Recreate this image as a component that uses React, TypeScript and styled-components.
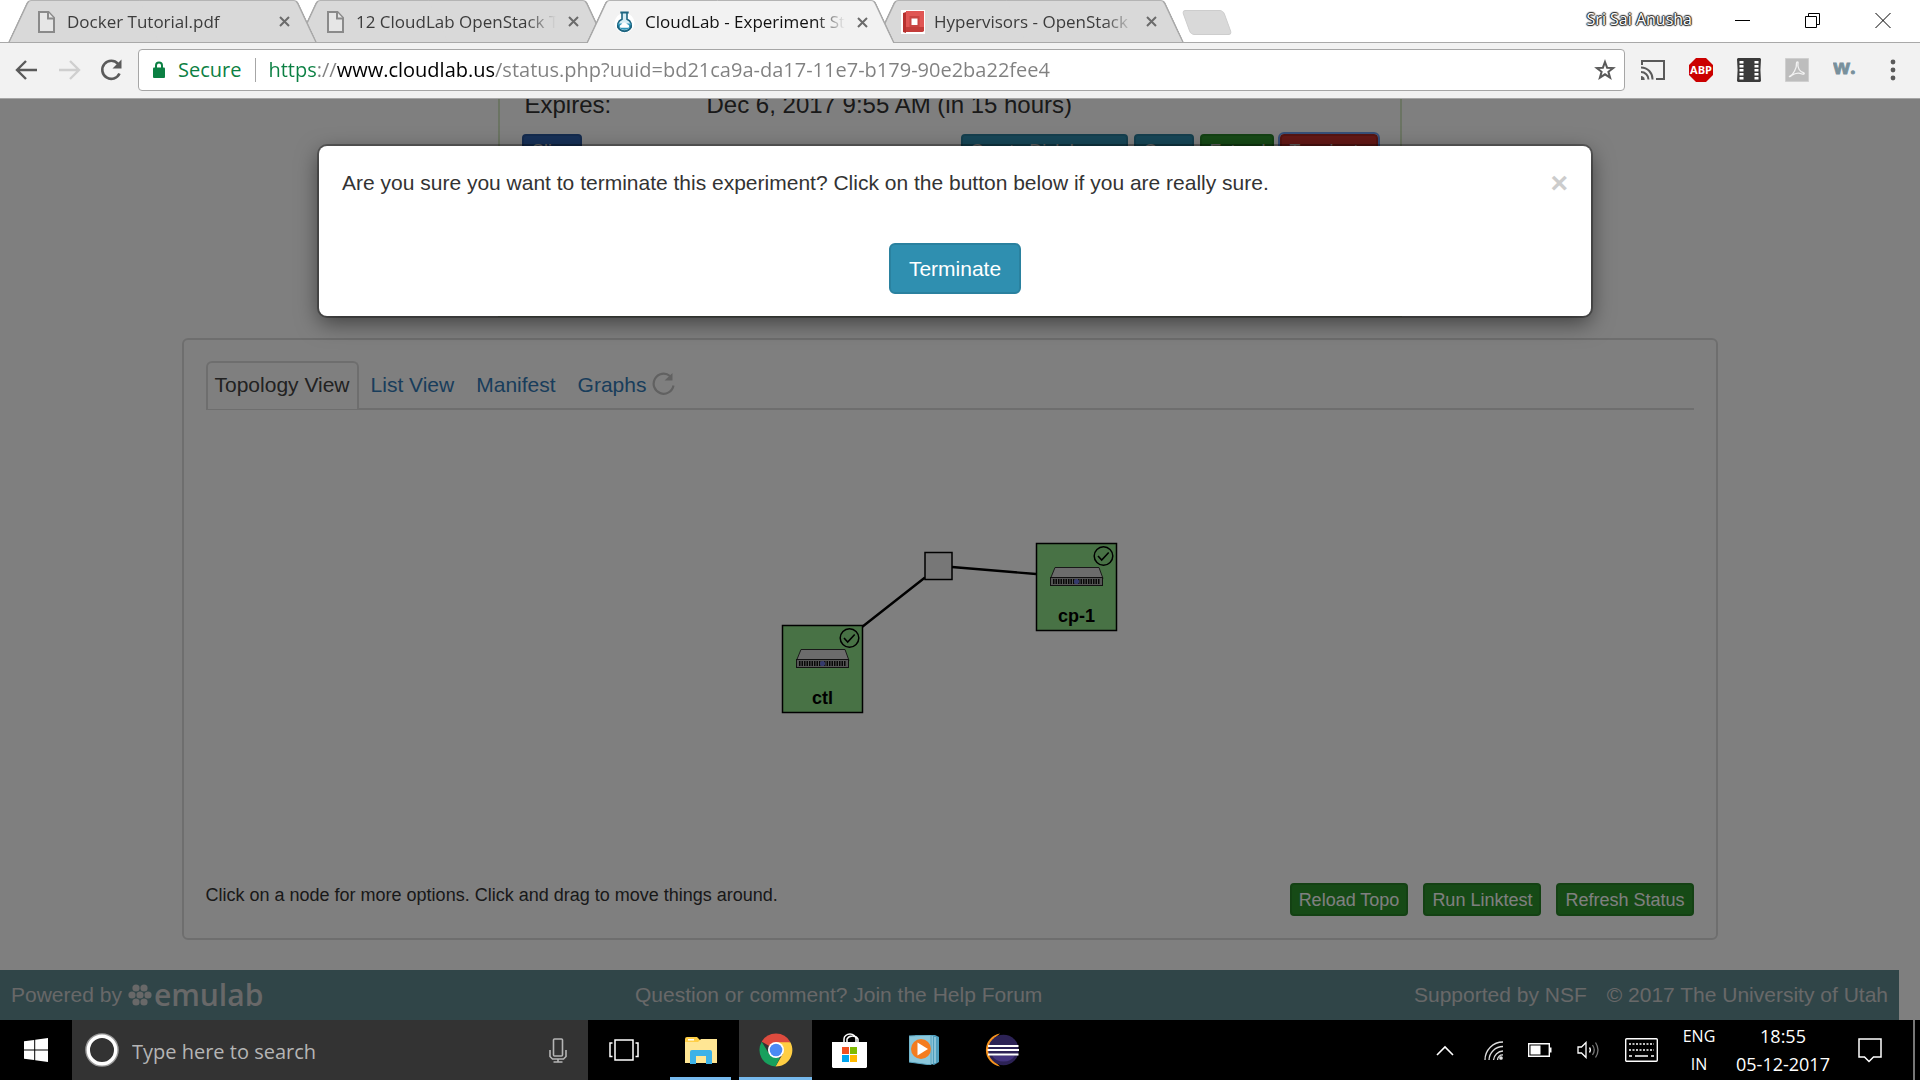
import React from "react";
import styled, { createGlobalStyle, css } from "styled-components";

const GlobalStyle = createGlobalStyle`
  *, *::before, *::after { box-sizing: border-box; }
  body { margin: 0; background: #fff; overflow: hidden; }
  button, input { font: inherit; color: inherit; }
  button { padding: 0; border: 0; background: none; cursor: pointer; }
  svg { display: block; flex: none; }
`;

const uiFont = `"Open Sans", "Noto Sans", sans-serif`;
const pageFont = `"Liberation Sans", Arial, sans-serif`;

const Desktop = styled.div`
  display: flex;
  flex-direction: column;
  height: 100vh;
  font-family: ${uiFont};
`;

/* ---------- Browser tab strip ---------- */

const TabStrip = styled.header`
  display: flex;
  height: 43px;
  padding-left: 8px;
  background: #fff;
  border-bottom: 1px solid #a9a9a9;
`;

const Tab = styled.div<{ $active?: boolean; $level: number }>`
  position: relative;
  z-index: ${(p) => p.$level};
  display: flex;
  align-items: center;
  flex: 0 1 309px;
  min-width: 0;
  height: ${(p) => (p.$active ? 43 : 42)}px;
  margin-right: -20px;
  padding: 1px 25px 0 26px;
  font-size: 17px;
  color: ${(p) => (p.$active ? "#111" : "#3c3c3c")};

  &::before,
  &::after {
    content: "";
    position: absolute;
    z-index: -1;
    top: 0;
    bottom: 0;
    width: 51%;
    background: ${(p) => (p.$active ? "#f2f2f2" : "#d9d9d9")};
    border-top: 1px solid #b4b4b4;
  }
  &::before {
    left: 0;
    border-left: 2px solid #a9a9a9;
    border-top-left-radius: 4px;
    transform: skewX(-25deg);
    transform-origin: bottom left;
  }
  &::after {
    right: 0;
    border-right: 2px solid #a9a9a9;
    border-top-right-radius: 4px;
    transform: skewX(25deg);
    transform-origin: bottom right;
  }
`;

const TabIcon = styled.span`
  display: flex;
  flex: none;
  justify-content: center;
  width: 24px;
`;

const TabTitle = styled.span`
  flex: 1;
  min-width: 0;
  margin: 0 10px 0 9px;
  overflow: hidden;
  white-space: nowrap;
  line-height: 24px;
  mask-image: linear-gradient(to right, #000 calc(100% - 30px), transparent);
`;

const TabClose = styled.button`
  display: flex;
  padding: 2px;
  color: #6b6b6b;
`;

const NewTab = styled.button`
  width: 42px;
  height: 25px;
  margin: 10px 0 0 22px;
  background: #d9d9d9;
  border: 1px solid #cdcdcd;
  border-radius: 4px;
  transform: skewX(20deg);
`;

const WindowControls = styled.div`
  display: flex;
  align-items: flex-start;
  margin-left: auto;
  padding-right: 29px;
`;

const UserName = styled.span`
  margin: 8px 43px 0 0;
  font-size: 16px;
  line-height: 22px;
  color: #fff;
  text-shadow: 1px 0 1px #222, -1px 0 1px #222, 0 1px 1px #222, 0 -1px 1px #222, 0 0 2px #333;
`;

const WindowButton = styled.button`
  display: flex;
  margin: 12px 0 0 54px;
  &:first-of-type { margin-left: 0; }
`;

/* ---------- Browser toolbar ---------- */

const Toolbar = styled.nav`
  display: flex;
  align-items: center;
  height: 56px;
  padding: 0 20px 2px 14px;
  background: #f2f2f2;
  border-bottom: 1px solid #a6a6a6;
`;

const NavButtons = styled.div`
  display: flex;
  gap: 16px;
  margin-right: 14px;
`;

const IconButton = styled.button`
  display: flex;
`;

const Omnibox = styled.div`
  display: flex;
  align-items: center;
  flex: 1;
  height: 42px;
  padding: 0 8px 0 13px;
  font-size: 20px;
  background: #fff;
  border: 1px solid #a6a6a6;
  border-radius: 4px;
`;

const Secure = styled.label`
  margin: 0 12px 0 12px;
  padding-right: 14px;
  line-height: 24px;
  color: #0b8043;
  border-right: 1px solid #a6a6a6;
`;

const UrlInput = styled.input`
  flex: 1;
  min-width: 0;
  height: 30px;
  padding: 0;
  border: 0;
  outline: 0;
  background: linear-gradient(to right, #0b8043 48px, #808080 48px 68px, #000 68px 227px, #808080 227px);
  background-clip: text;
  -webkit-background-clip: text;
  -webkit-text-fill-color: transparent;
`;

const Extensions = styled.div`
  display: flex;
  align-items: center;
  gap: 24px;
  margin-left: 16px;
  & > :last-child { margin-left: 5px; }
`;

/* ---------- Experiment page ---------- */

const Viewport = styled.div`
  position: relative;
  display: flex;
  flex: 1;
  flex-direction: column;
  min-height: 0;
  padding-right: 21px;
  overflow: hidden;
  background: #fff;
  font-family: ${pageFont};
  color: #333;
`;

const Details = styled.section`
  width: 904px;
  height: 226px;
  margin: -8px auto 0;
  padding: 0 22px;
  border: 2px solid #d6e9c6;
  border-top: 0;
`;

const DetailRow = styled.dl`
  display: grid;
  grid-template-columns: 182px 1fr;
  margin: 0 0 15px;
  padding-left: 3px;
  font-size: 24px;
  line-height: 28px;
  dt, dd { margin: 0; }
`;

const ActionRow = styled.div`
  display: flex;
  gap: 6px;
`;

const tones = {
  blue: css`background: #2f62b0; border-color: #29569c;`,
  teal: css`background: #2f8fb0; border-color: #2a7f9d;`,
  green: css`background: #2c942c; border-color: #268226;`,
  red: css`background: #c9302c; border-color: #ac2925; outline: 2px solid #6f9ff0;`,
};

const SmallButton = styled.button<{ $tone: keyof typeof tones; $push?: boolean }>`
  height: 33px;
  min-width: 60px;
  padding: 0 7px;
  font-size: 18px;
  line-height: 26px;
  white-space: nowrap;
  color: #fff;
  border: 2px solid;
  border-radius: 4px;
  ${(p) => tones[p.$tone]}
  ${(p) => p.$push && css`margin-right: auto;`}
`;

const Panel = styled.main`
  width: 81%;
  max-width: 1536px;
  margin: 21px auto 0;
  padding: 22px;
  border: 2px solid #ddd;
  border-radius: 6px;
`;

const ViewTabs = styled.div`
  display: flex;
  align-items: center;
  height: 48px;
  font-size: 21px;
  border-bottom: 2px solid #ddd;
`;

const ViewTab = styled.a<{ $active?: boolean }>`
  height: 48px;
  padding: 0 11px;
  line-height: 48px;
  color: #337ab7;
  text-decoration: none;
  &:last-of-type { padding-right: 6px; }
  ${(p) =>
    p.$active &&
    css`
      margin-right: 1px;
      padding: 0 7px;
      color: #444;
      background: #fff;
      border: 2px solid #ddd;
      border-bottom: 0;
      border-radius: 6px 6px 0 0;
      line-height: 44px;
    `}
`;

const Canvas = styled.div`
  display: flex;
  align-items: center;
  justify-content: center;
  height: 436px;
`;

const PanelFooter = styled.div`
  display: flex;
  align-items: flex-start;
  gap: 15px;
  margin-top: 37px;
`;

const Hint = styled.p`
  flex: 1;
  margin: 0;
  font-size: 18px;
  line-height: 24px;
`;

const PageFooter = styled.footer`
  display: flex;
  align-items: center;
  justify-content: space-between;
  height: 50px;
  margin-top: auto;
  padding: 0 11px;
  font-size: 21px;
  color: #d0d0d0;
  background: #608a90;
  a { color: inherit; text-decoration: none; }
`;

const FooterGroup = styled.div<{ $end?: boolean }>`
  display: flex;
  align-items: center;
  gap: ${(p) => (p.$end ? 20 : 6)}px;
`;

const Emulab = styled.a`
  display: flex;
  align-items: center;
  gap: 2px;
  font-family: ${uiFont};
  font-size: 30px;
  font-weight: 600;
  line-height: 36px;
`;

/* ---------- Terminate dialog ---------- */

const Backdrop = styled.div`
  position: absolute;
  inset: 0;
  display: flex;
  align-items: flex-start;
  justify-content: center;
  padding: 47px 10px 0 0;
  background: rgba(0, 0, 0, 0.5);
`;

const Dialog = styled.div`
  width: 67%;
  max-width: 1272px;
  padding: 23px 23px 22px;
  background: #fff;
  border-radius: 8px;
  box-shadow: 0 0 0 2px rgba(0, 0, 0, 0.3), 0 7px 22px rgba(0, 0, 0, 0.5);
  text-align: center;
`;

const DialogHead = styled.div`
  display: flex;
  align-items: center;
  justify-content: space-between;
  height: 28px;
  font-size: 21px;
`;

const DialogClose = styled.button`
  font-size: 30px;
  font-weight: 700;
  line-height: 28px;
  color: #ccc;
`;

const ConfirmButton = styled.button`
  height: 51px;
  margin-top: 46px;
  padding: 0 18px;
  font-size: 21px;
  color: #fff;
  background: #2f8fb0;
  border: 2px solid #2a819f;
  border-radius: 6px;
`;

/* ---------- Windows taskbar ---------- */

const Taskbar = styled.footer`
  display: flex;
  height: 60px;
  color: #fff;
  background: #000;
`;

const TaskButton = styled.button<{ $width: number; $active?: boolean; $running?: boolean }>`
  display: flex;
  align-items: center;
  justify-content: center;
  width: ${(p) => p.$width}px;
  background: ${(p) => (p.$active ? "#333" : "transparent")};
  border-top: 3px solid transparent;
  border-bottom: 3px solid ${(p) => (p.$running ? "#76b9ed" : "transparent")};
`;

const Search = styled.div`
  display: flex;
  align-items: center;
  width: 516px;
  padding: 0 21px 0 13px;
  background: #333;
  input {
    flex: 1;
    min-width: 0;
    height: 36px;
    margin-left: 13px;
    padding: 2px 0 0;
    font-size: 20px;
    background: none;
    border: 0;
    outline: 0;
  }
  input::placeholder { color: #b5b5b5; opacity: 1; }
`;

const AppGroup = styled.div`
  display: flex;
  gap: 8px;
  margin-left: 10px;
`;

const Tray = styled.div`
  display: flex;
  align-items: center;
  margin-left: auto;
`;

const TrayIcons = styled.div`
  display: flex;
  align-items: center;
  gap: 25px;
  margin-right: 22px;
  & > :first-child { margin-right: 5px; }
`;

const TrayText = styled.div<{ $width: number; $size: number }>`
  width: ${(p) => p.$width}px;
  font-size: ${(p) => p.$size}px;
  line-height: 28px;
  text-align: center;
`;

const Notifications = styled.button`
  display: flex;
  margin: 0 31px 0 10px;
`;

const ShowDesktop = styled.button`
  width: 7px;
  height: 60px;
  border-left: 2px solid #777;
`;

/* ---------- Drawings ---------- */

const PageIcon = () => (
  <svg width="17" height="22" viewBox="0 0 17 22" fill="#e6e6e6" stroke="#8a8a8a" strokeWidth="2">
    <path d="M1 1h9.500l5.500 6v14H1z" />
    <path d="M10 1v6.500h6" />
  </svg>
);

const FlaskIcon = () => (
  <svg width="21" height="22" viewBox="0 0 21 22">
    <circle cx="10.500" cy="12" r="10" fill="#fff" />
    <path d="M8 1.500v6.700A6.800 6.300 0 1 0 13 8.200V1.500" fill="#d6edf5" stroke="#1b6480" strokeWidth="1.600" />
    <path d="M3.800 12.500h13.400a6.700 6.300 0 1 1-13.400 0z" fill="#2d95b9" />
    <path d="M3.700 14a6.800 6.300 0 0 0 13.600 0" fill="none" stroke="#1b6480" strokeWidth="1.600" />
    <path d="M6.300 1.500h8.400" stroke="#1b6480" strokeWidth="2" />
    <path d="M6.500 16.800a1.900 1.900 0 0 1 .8-3.300 3.300 3 0 0 1 6-.3 2 2 0 0 1 1 3.600z" fill="#fff" />
  </svg>
);

const OpenStackIcon = () => (
  <svg width="24" height="24" viewBox="0 0 24 24">
    <path fill="#fff" d="M0 0h24v24H0z" />
    <path fill="#b7302e" d="M2 3l3-1v21l-3-1z" />
    <path fill="#e05654" d="M5 1h18v20l-2 1H5z" />
    <path fill="#c33c39" d="M5 17h18v4l-2 1H5z" />
    <path fill="#c94543" d="M8.500 6h10v11h-10z" />
    <path fill="#fff" d="M10.500 8.500h6v6.500h-6z" />
  </svg>
);

const Cross = () => (
  <svg width="11" height="11" viewBox="0 0 11 11" stroke="currentColor" strokeWidth="2">
    <path d="M1 1l9 9M10 1l-9 9" />
  </svg>
);

const Arrow = ({ forward }: { forward?: boolean }) => (
  <svg width="26" height="26" viewBox="0 0 26 26" fill="none" stroke={forward ? "#cfcfcf" : "#5a5a5a"} strokeWidth="2.400">
    <path d={forward ? "M3 13h19M14 4l9 9-9 9" : "M23 13H4M12 4l-9 9 9 9"} />
  </svg>
);

const ReloadIcon = () => (
  <svg width="26" height="26" viewBox="0 0 26 26" fill="none">
    <path d="M21.500 16.500A9 9 0 1 1 20 6.800" stroke="#5a5a5a" strokeWidth="2.600" />
    <path d="M23.500 2.500v9h-9z" fill="#5a5a5a" />
  </svg>
);

const RefreshIcon = () => (
  <svg width="24" height="26" viewBox="0 0 24 26" fill="none">
    <path d="M21.500 13.500a10 10 0 1 1-3.500-9.500" stroke="#c2c2c2" strokeWidth="2.200" />
    <path d="M20.500 1v7.500h-8z" fill="#c2c2c2" />
  </svg>
);

const LockIcon = () => (
  <svg width="14" height="18" viewBox="0 0 14 18" fill="none">
    <path d="M4 8V4.500a3 3 0 0 1 6 0V8" stroke="#0b8043" strokeWidth="2" />
    <rect x="1" y="6.500" width="12" height="10.500" rx="1" fill="#0b8043" />
  </svg>
);

const StarIcon = () => (
  <svg width="22" height="22" viewBox="0 0 22 22" fill="none" stroke="#5a5a5a" strokeWidth="2">
    <path d="M11 3l2.100 5.700 6.100.3-4.800 3.800 1.700 5.900-5.100-3.400-5.100 3.400 1.700-5.900L2.800 9l6.100-.3z" />
  </svg>
);

const CastIcon = () => (
  <svg width="24" height="20" viewBox="0 0 24 20" fill="none" stroke="#5a5a5a" strokeWidth="2">
    <path d="M1 5V1h22v18h-8M0 7.500A11.500 11.500 0 0 1 11.500 19.500M0 12a7.500 7.500 0 0 1 7.500 7.500" />
    <path d="M0 16a3.700 3.700 0 0 1 3.700 4H0z" fill="#5a5a5a" stroke="none" />
  </svg>
);

const AbpIcon = () => (
  <svg width="24" height="24" viewBox="0 0 24 24">
    <path d="M7 0h10l7 7v10l-7 7H7l-7-7V7z" fill="#cb0000" />
    <text x="12" y="16" fill="#fff" fontFamily="Open Sans, sans-serif" fontSize="11" fontWeight="700" textAnchor="middle">ABP</text>
  </svg>
);

const FilmIcon = () => (
  <svg width="24" height="24" viewBox="0 0 24 24">
    <path d="M1 0h22l1 1-.6 11 .6 11-1 1H1l-1-1 .6-11L0 1z" fill="#3a3a3a" />
    {[3, 7, 11, 15, 19].map((y) => (
      <path key={y} d={`M2.500 ${y}h4v2.400h-4zM17.500 ${y}h4v2.400h-4z`} fill="#fff" />
    ))}
  </svg>
);

const PdfIcon = () => (
  <svg width="24" height="24" viewBox="0 0 24 24" fill="none">
    <path d="M.5.5h23v23H.5z" fill="#bdbdbd" stroke="#cfcfcf" />
    <path d="M5 18c3-1 7-8 6.500-13 0-1.500 2-1.500 1.500 0-1 5 2 9 6 10 1 1-1 1.500-2 1-3-1.500-7-1-10.500 1.500-1.500 1.500-3 1.500-1.500.5z" stroke="#f2f2f2" strokeWidth="1.300" />
  </svg>
);

const WIcon = () => (
  <svg width="24" height="24" viewBox="0 0 24 24">
    <text x="0" y="16" fill="#78909c" stroke="#78909c" strokeWidth=".8" fontFamily="Open Sans, sans-serif" fontSize="20" fontWeight="700">w.</text>
  </svg>
);

const MenuDots = () => (
  <svg width="14" height="22" viewBox="0 0 14 22" fill="#5a5a5a">
    <circle cx="7" cy="3" r="2.400" />
    <circle cx="7" cy="11" r="2.400" />
    <circle cx="7" cy="19" r="2.400" />
  </svg>
);

const ServerNode = ({ x, y, name }: { x: number; y: number; name: string }) => (
  <g transform={`translate(${x} ${y})`}>
    <rect x=".5" y=".5" width="80" height="87" fill="#90e48a" stroke="#000" strokeWidth="1.500" />
    <circle cx="67.500" cy="13" r="9.300" fill="none" stroke="#000" strokeWidth="1.500" />
    <path d="M62 13l3.700 4 7-7.500" fill="none" stroke="#000" strokeWidth="1.600" />
    <path d="M19 24.500h44l4 11H14.500z" fill="#d8d8d8" stroke="#333" />
    <rect x="14.500" y="34.500" width="52" height="8" fill="#aaa" stroke="#222" />
    <path d="M17 38.500h47" stroke="#111" strokeWidth="5" strokeDasharray="1.500 1" />
    <circle cx="40.500" cy="38.500" r="2.600" fill="#6a74d8" />
    <text x="40.500" y="79" fontFamily="Liberation Sans, Arial, sans-serif" fontSize="18" fontWeight="700" textAnchor="middle">{name}</text>
  </g>
);

const Topology = () => (
  <svg width="338" height="172" viewBox="0 0 338 172">
    <path d="M144 35.500L81 85M171 25l84 7" stroke="#000" strokeWidth="2.400" />
    <rect x="144" y="10.500" width="27" height="27" fill="#efefef" stroke="#000" strokeWidth="1.500" />
    <ServerNode x={1} y={83} name="ctl" />
    <ServerNode x={255} y={1} name="cp-1" />
  </svg>
);

const Flower = () => (
  <svg width="24" height="22" viewBox="0 0 24 22" fill="#d0d0d0">
    {[[8, 4], [16, 4], [4, 11], [12, 11], [20, 11], [8, 18], [16, 18]].map(([cx, cy]) => (
      <circle key={`${cx}-${cy}`} cx={cx} cy={cy} r="3.600" />
    ))}
  </svg>
);

const WindowsLogo = () => (
  <svg width="24" height="24" viewBox="0 0 24 24" fill="#fff">
    <path d="M0 3.300l10.200-1.400v9.600H0zM11.200 1.700L24 0v11.500H11.200zM0 12.500h10.200v9.600L0 20.700zM11.200 12.500H24V24l-12.800-1.700z" />
  </svg>
);

const CortanaIcon = () => (
  <svg width="34" height="34" viewBox="0 0 34 34" fill="none">
    <circle cx="17" cy="17" r="15.800" stroke="#9a9a9a" strokeWidth="2" />
    <circle cx="17" cy="17" r="13.700" stroke="#fff" strokeWidth="3.400" />
  </svg>
);

const MicIcon = () => (
  <svg width="18" height="25" viewBox="0 0 18 25" fill="none" stroke="#b5b5b5" strokeWidth="1.600">
    <rect x="4.500" y="1" width="9" height="17" rx="1" />
    <path d="M1 12v6.500l2.500 2.500h11l2.500-2.500V12M9 21v3M4.500 24h9" />
  </svg>
);

const TaskViewIcon = () => (
  <svg width="30" height="22" viewBox="0 0 30 22" fill="none" stroke="#fff" strokeWidth="1.500">
    <path d="M6 1h18v20H6zM3.500 4H1v13.500h2.500M26.500 4H29v13.500h-2.500" />
  </svg>
);

const FolderIcon = () => (
  <svg width="32" height="27" viewBox="0 0 32 27">
    <path d="M0 2a2 2 0 0 1 2-2h10l3 3h16v23H0z" fill="#ffcf48" />
    <path d="M0 5h13l3-3h16v24H0z" fill="#ffe694" />
    <path d="M3 2h6v1.500H3z" fill="#fff" />
    <path d="M5 26V15a2 2 0 0 1 2-2h18a2 2 0 0 1 2 2v12h-6v-8H11v8H5z" fill="#3db2e8" />
  </svg>
);

const ChromeIcon = () => (
  <svg width="34" height="34" viewBox="0 0 34 34">
    <path d="M17 17L2.700 8.700A16.500 16.500 0 0 1 31.300 9z" fill="#dd4b3e" />
    <path d="M17 9.200h14.400A16.500 16.500 0 0 1 16.500 33.500L24 20.500z" fill="#ffce43" />
    <path d="M2.700 8.700L10.200 21 17 24.800h4L16.500 33.500A16.500 16.500 0 0 1 2.700 8.700z" fill="#17a05d" />
    <circle cx="17" cy="17" r="8" fill="#fff" />
    <circle cx="17" cy="17" r="6.300" fill="#4a8af4" />
  </svg>
);

const StoreIcon = () => (
  <svg width="36" height="35" viewBox="0 0 36 35">
    <path d="M12 10V6a6 5 0 0 1 12 0v4M15 10V6a6 5 0 0 1 11 0v4" fill="none" stroke="#fff" strokeWidth="1.500" />
    <path d="M0 9h35v25l-1 1H1l-1-1z" fill="#fff" />
    <path d="M10 14h7v7h-7z" fill="#f25022" />
    <path d="M18 14h7v7h-7z" fill="#7fba00" />
    <path d="M10 22h7v7h-7z" fill="#00a4ef" />
    <path d="M18 22h7v7h-7z" fill="#ffb900" />
  </svg>
);

const PlayerIcon = () => (
  <svg width="30" height="30" viewBox="0 0 30 30">
    <path d="M6 0h20l4 2v25l-5 3-5-2z" fill="#4f9fbe" />
    <path d="M23 1v28M26 2v26" stroke="#c5e6f1" />
    <path d="M0 1l22-1v30L0 27z" fill="#8cc8dc" stroke="#5aa5c0" />
    <circle cx="12" cy="14" r="10" fill="#f47c20" />
    <path d="M8.500 7.500L19 14 8.500 20.500z" fill="#fff" />
  </svg>
);

const EclipseIcon = () => (
  <svg width="36" height="34" viewBox="0 0 36 34">
    <path d="M17 .5A16.700 16.700 0 0 0 17 33.500 20 20 0 0 1 17 .5z" fill="#f7941e" />
    <circle cx="20.500" cy="17" r="15.300" fill="#2c2255" />
    <path d="M9 22.500h23a12.500 10 0 0 1-23 0z" fill="#43347e" />
    <path d="M5 13h30.500M4.500 17h31.500M5 21.500h30.500" stroke="#fff" strokeWidth="2.200" />
  </svg>
);

const ChevronUp = () => (
  <svg width="18" height="11" viewBox="0 0 18 11" fill="none" stroke="#fff" strokeWidth="1.600">
    <path d="M1 10l8-8 8 8" />
  </svg>
);

const WifiIcon = () => (
  <svg width="19" height="19" viewBox="0 0 19 19" fill="none" stroke="#ddd" strokeWidth="1.300">
    <path d="M1 19A18 18 0 0 1 19 1M5 19A14 14 0 0 1 19 5.500M9.500 19A10 10 0 0 1 19 10M13.500 19a5 5 0 0 1 5.500-5" />
    <circle cx="17" cy="17" r="1.200" fill="#fff" />
  </svg>
);

const BatteryIcon = () => (
  <svg width="24" height="14" viewBox="0 0 24 14">
    <path d="M.7.700h20.600v12.600H.7z" fill="none" stroke="#fff" strokeWidth="1.400" />
    <path d="M2.500 2.500h10v9h-10zM22 4.500h1.500v5H22z" fill="#fff" />
  </svg>
);

const SpeakerIcon = () => (
  <svg width="23" height="18" viewBox="0 0 23 18" fill="none" stroke="#fff" strokeWidth="1.300">
    <path d="M1 6h3.500L9 1.500v15L4.500 12H1z" />
    <path d="M12.500 6.500q1.800 2.500 0 5" />
    <path d="M15.500 4q3.500 5 0 10M18.500 1.500q5 7.500 0 15" stroke="#777" />
  </svg>
);

const KeyboardIcon = () => (
  <svg width="33" height="24" viewBox="0 0 33 24" fill="none" stroke="#fff" strokeWidth="1.400">
    <rect x=".7" y=".7" width="31.600" height="22.600" rx="1" />
    <path d="M4 6h25M4 12h25" strokeDasharray="2 1.500" />
    <path d="M4 18h3M10 18h13M26 18h3" />
  </svg>
);

const NoteIcon = () => (
  <svg width="24" height="25" viewBox="0 0 24 25" fill="none" stroke="#fff" strokeWidth="1.500">
    <path d="M1 1h22v18h-7.500L11 23.500 6.500 19H1z" />
  </svg>
);

/* ---------- App ---------- */

const browserTabs = [
  { title: "Docker Tutorial.pdf", icon: <PageIcon />, level: 3 },
  { title: "12 CloudLab OpenStack T", icon: <PageIcon />, level: 2 },
  { title: "CloudLab - Experiment St", icon: <FlaskIcon />, level: 4, active: true },
  { title: "Hypervisors - OpenStack", icon: <OpenStackIcon />, level: 1 },
];

export default function App() {
  return (
    <Desktop>
      <GlobalStyle />
      <TabStrip>
        {browserTabs.map((tab) => (
          <Tab key={tab.title} $active={tab.active} $level={tab.level}>
            <TabIcon>{tab.icon}</TabIcon>
            <TabTitle>{tab.title}</TabTitle>
            <TabClose aria-label="Close tab"><Cross /></TabClose>
          </Tab>
        ))}
        <NewTab aria-label="New tab" />
        <WindowControls>
          <UserName>Sri Sai Anusha</UserName>
          <WindowButton aria-label="Minimise">
            <svg width="16" height="16" stroke="#000"><path d="M0 8.500h15" /></svg>
          </WindowButton>
          <WindowButton aria-label="Restore">
            <svg width="16" height="16" fill="none" stroke="#000"><path d="M.5 4.500h11v11H.5zM3.500 4.500v-3h11v11h-3" /></svg>
          </WindowButton>
          <WindowButton aria-label="Close">
            <svg width="16" height="16" stroke="#000"><path d="M.5 1l15 15M15.500 1l-15 15" /></svg>
          </WindowButton>
        </WindowControls>
      </TabStrip>

      <Toolbar>
        <NavButtons>
          <IconButton aria-label="Back"><Arrow /></IconButton>
          <IconButton aria-label="Forward"><Arrow forward /></IconButton>
          <IconButton aria-label="Reload"><ReloadIcon /></IconButton>
        </NavButtons>
        <Omnibox>
          <LockIcon />
          <Secure htmlFor="url">Secure</Secure>
          <UrlInput id="url" defaultValue="https://www.cloudlab.us/status.php?uuid=bd21ca9a-da17-11e7-b179-90e2ba22fee4" />
          <IconButton aria-label="Bookmark"><StarIcon /></IconButton>
        </Omnibox>
        <Extensions>
          <IconButton aria-label="Cast"><CastIcon /></IconButton>
          <IconButton aria-label="Adblock Plus"><AbpIcon /></IconButton>
          <IconButton aria-label="Video"><FilmIcon /></IconButton>
          <IconButton aria-label="Acrobat"><PdfIcon /></IconButton>
          <IconButton aria-label="Wikiwand"><WIcon /></IconButton>
          <IconButton aria-label="Menu"><MenuDots /></IconButton>
        </Extensions>
      </Toolbar>

      <Viewport>
        <Details>
          <DetailRow>
            <dt>Expires:</dt>
            <dd>Dec 6, 2017 9:55 AM (in 15 hours)</dd>
          </DetailRow>
          <ActionRow>
            <SmallButton $tone="blue" $push>Slice</SmallButton>
            <SmallButton $tone="teal">Create Disk Image</SmallButton>
            <SmallButton $tone="teal">Copy</SmallButton>
            <SmallButton $tone="green">Extend</SmallButton>
            <SmallButton $tone="red">Terminate</SmallButton>
          </ActionRow>
        </Details>

        <Panel>
          <ViewTabs>
            <ViewTab href="#topology" $active>Topology View</ViewTab>
            <ViewTab href="#list">List View</ViewTab>
            <ViewTab href="#manifest">Manifest</ViewTab>
            <ViewTab href="#graphs">Graphs</ViewTab>
            <IconButton aria-label="Refresh"><RefreshIcon /></IconButton>
          </ViewTabs>
          <Canvas><Topology /></Canvas>
          <PanelFooter>
            <Hint>Click on a node for more options. Click and drag to move things around.</Hint>
            <SmallButton $tone="green">Reload Topo</SmallButton>
            <SmallButton $tone="green">Run Linktest</SmallButton>
            <SmallButton $tone="green">Refresh Status</SmallButton>
          </PanelFooter>
        </Panel>

        <PageFooter>
          <FooterGroup>
            Powered by
            <Emulab href="#emulab"><Flower />emulab</Emulab>
          </FooterGroup>
          <a href="#forum">Question or comment? Join the Help Forum</a>
          <FooterGroup $end>
            <a href="#nsf">Supported by NSF</a>
            <a href="#utah">© 2017 The University of Utah</a>
          </FooterGroup>
        </PageFooter>

        <Backdrop>
          <Dialog role="dialog" aria-label="Terminate experiment">
            <DialogHead>
              <span>Are you sure you want to terminate this experiment? Click on the button below if you are really sure.</span>
              <DialogClose aria-label="Close">×</DialogClose>
            </DialogHead>
            <ConfirmButton>Terminate</ConfirmButton>
          </Dialog>
        </Backdrop>
      </Viewport>

      <Taskbar>
        <TaskButton $width={72} aria-label="Start"><WindowsLogo /></TaskButton>
        <Search>
          <CortanaIcon />
          <input aria-label="Search" placeholder="Type here to search" />
          <IconButton aria-label="Dictate"><MicIcon /></IconButton>
        </Search>
        <TaskButton $width={72} aria-label="Task view"><TaskViewIcon /></TaskButton>
        <AppGroup>
          <TaskButton $width={61} $running aria-label="File Explorer"><FolderIcon /></TaskButton>
          <TaskButton $width={73} $active $running aria-label="Chrome"><ChromeIcon /></TaskButton>
          <TaskButton $width={60} aria-label="Store"><StoreIcon /></TaskButton>
          <TaskButton $width={72} aria-label="Media Player"><PlayerIcon /></TaskButton>
          <TaskButton $width={66} aria-label="Eclipse"><EclipseIcon /></TaskButton>
        </AppGroup>
        <Tray>
          <TrayIcons>
            <ChevronUp />
            <WifiIcon />
            <BatteryIcon />
            <SpeakerIcon />
            <KeyboardIcon />
          </TrayIcons>
          <TrayText $width={38} $size={16}>ENG<br />IN</TrayText>
          <TrayText $width={130} $size={18}>18:55<br />05-12-2017</TrayText>
          <Notifications aria-label="Notifications"><NoteIcon /></Notifications>
          <ShowDesktop aria-label="Show desktop" />
        </Tray>
      </Taskbar>
    </Desktop>
  );
}
